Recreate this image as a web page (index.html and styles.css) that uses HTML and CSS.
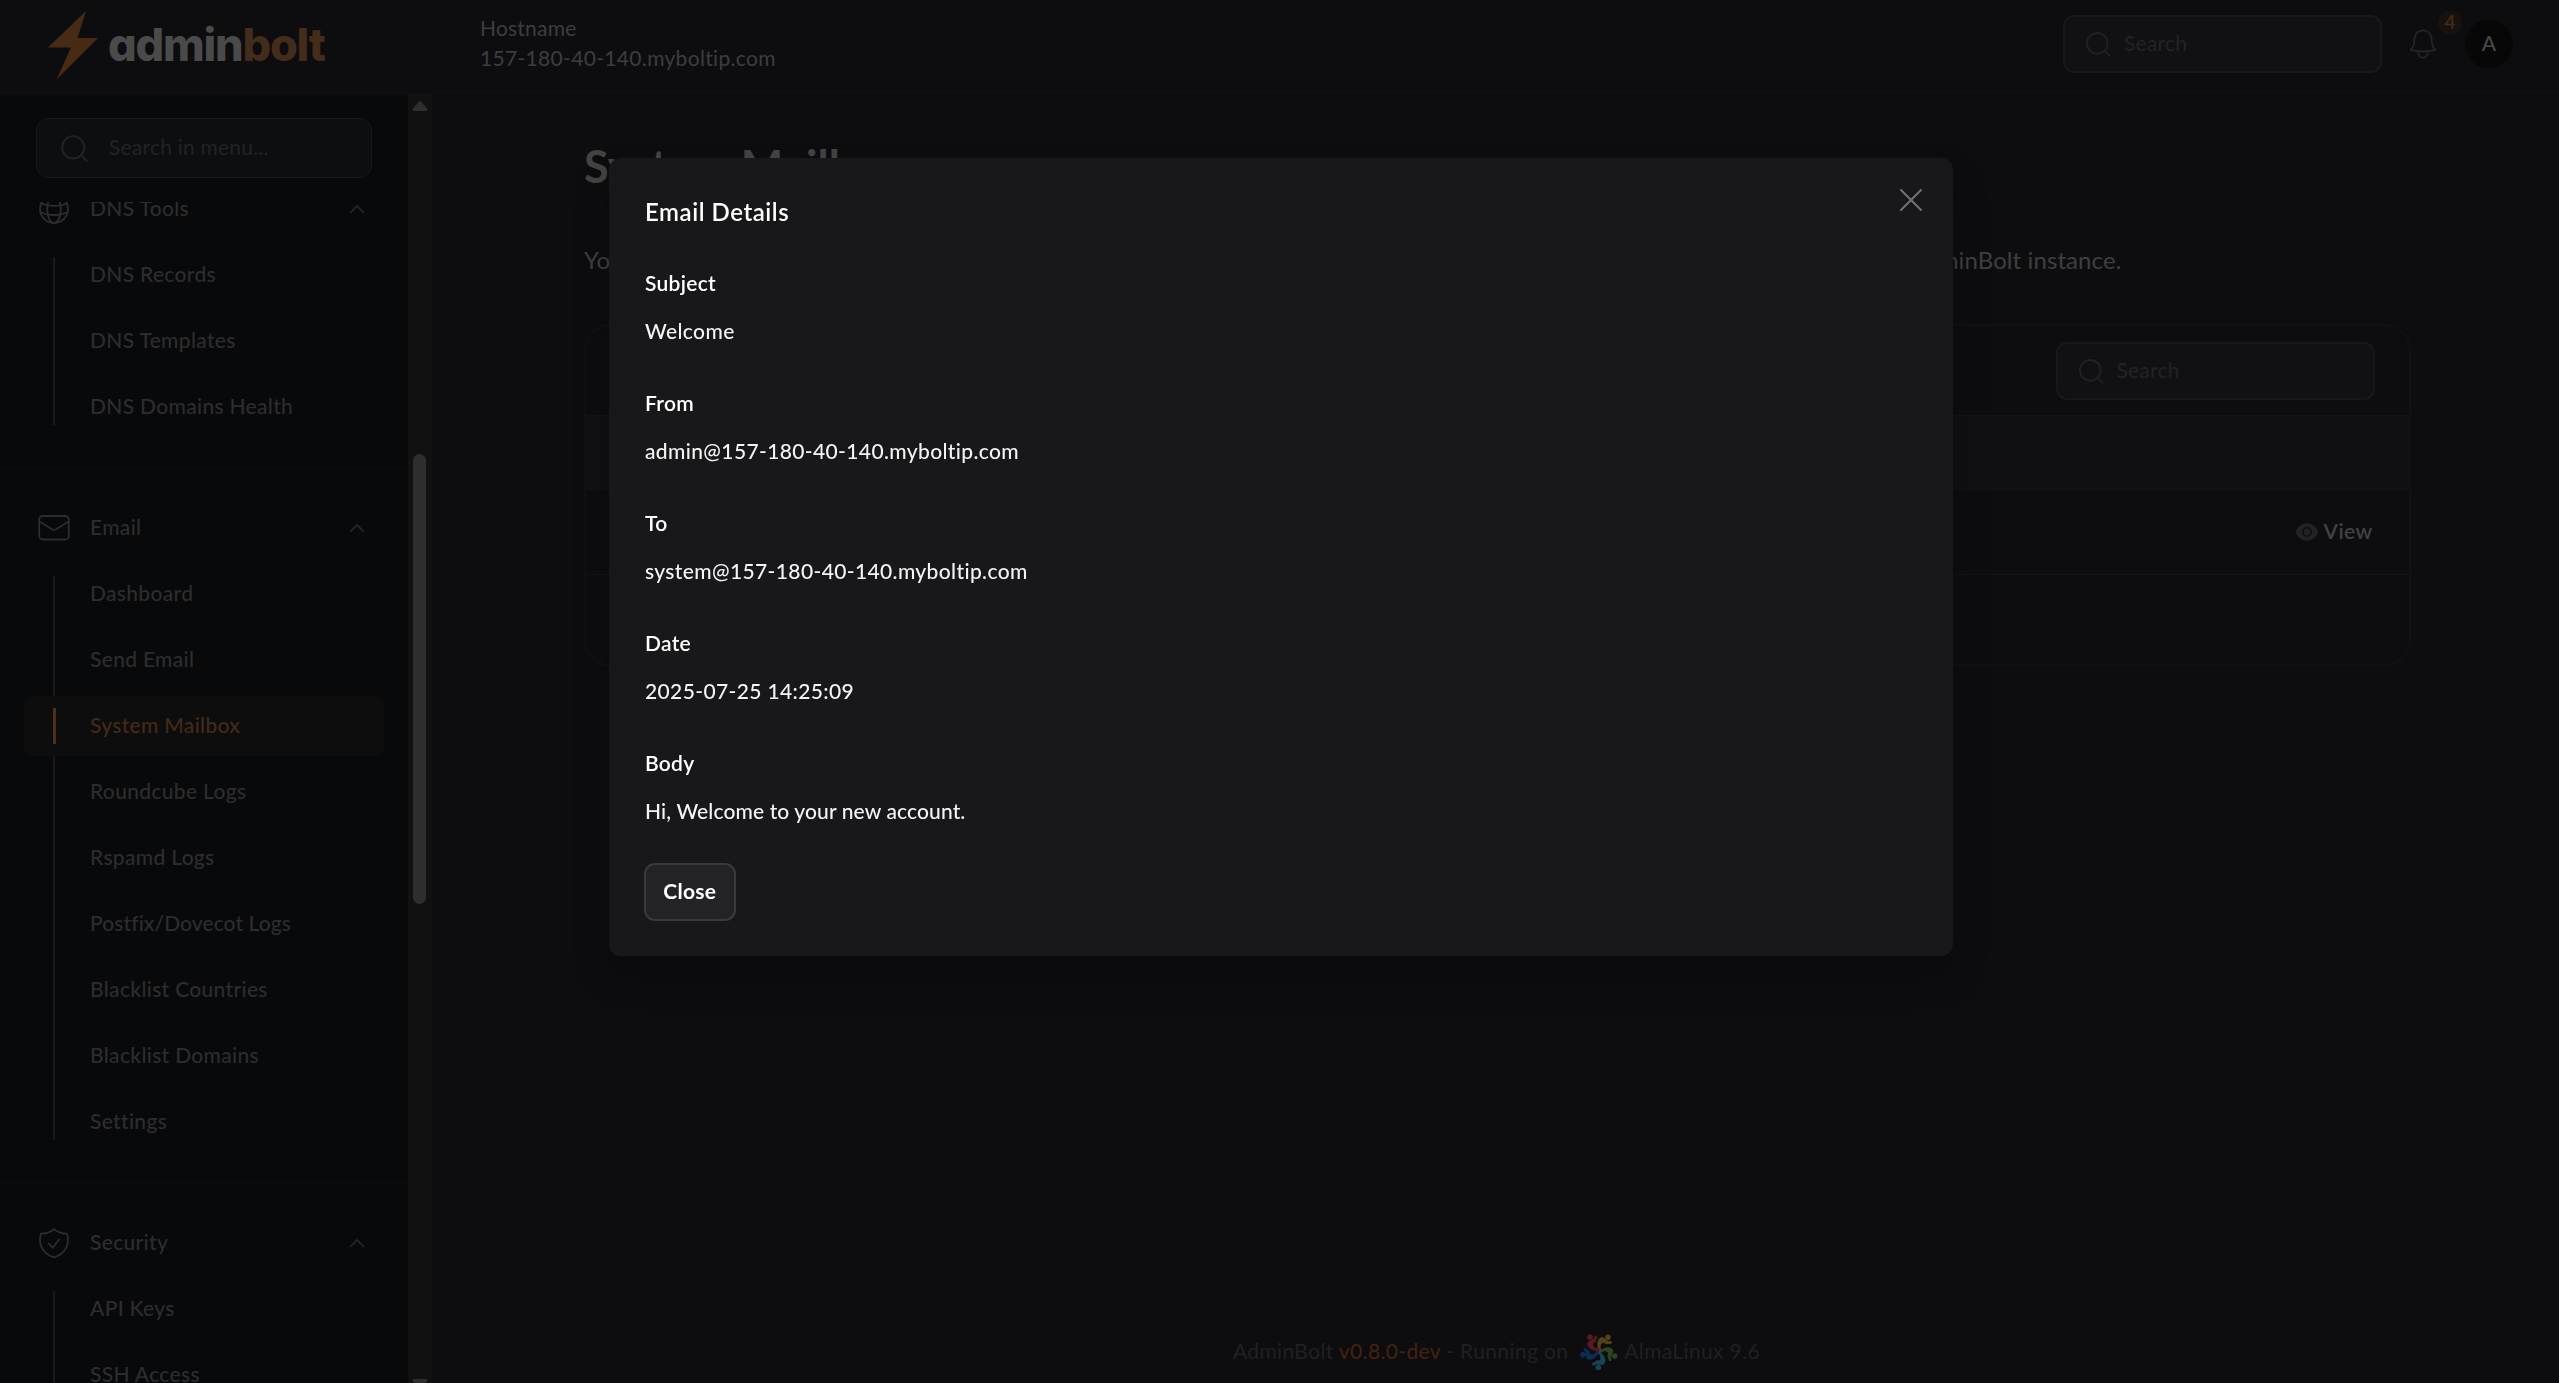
FILE: index.html
```html
<!DOCTYPE html>
<html lang="en">
<head>
<meta charset="utf-8">
<title>System Mailbox - AdminBolt</title>
<link rel="stylesheet" href="styles.css">
</head>
<body>
<svg class="defs" aria-hidden="true">
  <symbol id="search" viewBox="0 0 28 28"><circle cx="13.2" cy="13.3" r="11.1"/><path d="M21 21.2l5.6 5.6"/></symbol>
  <symbol id="chevron" viewBox="0 0 16 10"><path d="M1.6 8.4L8 2l6.400 6.400"/></symbol>
</svg>
<div class="app">
  <aside class="sidebar">
    <div class="brand">
      <svg class="bolt" viewBox="0 0 50 70"><defs><linearGradient id="g" x1="0" y1="0" x2="0" y2="1"><stop offset="0" stop-color="#452b18"/><stop offset="1" stop-color="#482b11"/></linearGradient></defs><path fill="url(#g)" d="M38 0L29.500 27H50L8.500 68.500 23 36.500H0z"/></svg>
      <span class="wordmark">admin<b>bolt</b></span>
    </div>
    <div class="side-body">
      <div class="side-col">
        <div class="menu-search"><svg class="ico28"><use href="#search"/></svg><span>Search in menu...</span></div>
        <nav class="nav">
          <section class="group group-first">
            <div class="group-head">
              <svg class="gicon" viewBox="0 0 36 36"><circle cx="18" cy="18" r="14"/><ellipse cx="18" cy="18" rx="6.800" ry="14"/><path d="M5 12.300c3.500 1.800 8 2.600 13 2.600s9.500-.8 13-2.600M4.200 20.700c3.600 2.100 8.400 3.300 13.800 3.300s10.200-1.200 13.800-3.300"/></svg>
              <span>DNS Tools</span><svg class="chev"><use href="#chevron"/></svg>
            </div>
            <ul><li>DNS Records</li><li>DNS Templates</li><li>DNS Domains Health</li></ul>
          </section>
          <section class="group">
            <div class="group-head">
              <svg class="gicon" viewBox="0 0 36 36"><rect x="3.200" y="6" width="29.600" height="23.500" rx="3.500"/><path d="M3.400 11.500L16 19.300a4 4 0 0 0 4 0l12.600-7.800"/></svg>
              <span>Email</span><svg class="chev"><use href="#chevron"/></svg>
            </div>
            <ul><li>Dashboard</li><li>Send Email</li><li class="active">System Mailbox</li><li>Roundcube Logs</li><li>Rspamd Logs</li><li class="tight">Postfix/Dovecot Logs</li><li>Blacklist Countries</li><li>Blacklist Domains</li><li>Settings</li></ul>
          </section>
          <section class="group">
            <div class="group-head">
              <svg class="gicon" viewBox="0 0 36 36"><path d="M18 4.200c-3.500 2.700-7.500 4.500-13 4.500-.7 2-1 4-1 6.300C4 23 9.500 30 18 32.300 26.500 30 32 23 32 15c0-2.300-.3-4.300-1-6.300-5.500 0-9.500-1.800-13-4.500zM12.800 18.500l4 4.300 6.400-8.600"/></svg>
              <span>Security</span><svg class="chev"><use href="#chevron"/></svg>
            </div>
            <ul><li>API Keys</li><li>SSH Access</li></ul>
          </section>
        </nav>
      </div>
      <div class="scrollbar">
        <svg class="arrow" viewBox="0 0 16 11"><path d="M8 2L2.200 9h11.600z"/></svg>
        <div class="thumb"></div>
        <svg class="arrow arrow-down" viewBox="0 0 16 11"><path d="M8 9L2.200 2h11.600z"/></svg>
      </div>
    </div>
  </aside>
  <main class="main">
    <header class="topbar">
      <div class="host"><span>Hostname</span><span class="host-name">157-180-40-140.myboltip.com</span></div>
      <div class="field"><svg class="ico26"><use href="#search"/></svg><span>Search</span></div>
      <div class="bell-wrap">
        <svg class="bell" viewBox="0 0 28 32"><path d="M14 2.300c-5 0-8.500 3.600-8.700 9l-.2 4c-.1 2.500-.9 4-3.500 6.500 4 1.200 8.200 1.700 12.400 1.700s8.400-.5 12.400-1.700c-2.600-2.500-3.400-4-3.500-6.500l-.2-4c-.2-5.400-3.700-9-8.700-9zM9.200 24.500c.3 3.200 2.200 5.200 4.800 5.200s4.500-2 4.800-5.200"/></svg>
        <span class="badge">4</span>
      </div>
      <div class="avatar">A</div>
    </header>
    <div class="page">
      <h1>System Mailbox</h1>
      <p class="intro"><span>You can view the system mailbox here.</span><span>These emails are sent by your AdminBolt instance.</span></p>
      <div class="card">
        <div class="card-tools"><div class="field"><svg class="ico26"><use href="#search"/></svg><span>Search</span></div></div>
        <div class="card-head"></div>
        <div class="card-row">
          <svg class="eye" viewBox="0 0 24 20"><path fill-rule="evenodd" d="M12 1.300C6.500 1.300 2.400 4.800.6 10c1.800 5.200 5.900 8.700 11.400 8.700S21.600 15.200 23.400 10C21.600 4.800 17.500 1.300 12 1.300zM12 5a5 5 0 1 1 0 10 5 5 0 0 1 0-10z"/><circle cx="12" cy="10" r="3.400"/></svg>
          <span>View</span>
        </div>
        <div class="card-foot"></div>
      </div>
    </div>
    <footer class="footer">
      <span>AdminBolt <b>v0.8.0-dev</b> - Running on</span>
      <svg class="alma" viewBox="-19 -19 38 38">
        <defs><g id="arm"><path d="M1 -1C-1.500 -7 -.5 -11 3 -12L7 -8.500 11.500 -8.500" fill="none" stroke-width="2.800"/><path d="M.8 -1C-3 -8 -1 -14 4 -14L9 -10 8 -6.500C4 -10 1.500 -8 .8 -1z" stroke="none"/><circle cx="9" cy="-13.800" r="2.800" stroke="none"/></g></defs>
        <use href="#arm" fill="#54411a" stroke="#54411a"/>
        <use href="#arm" fill="#2c4420" stroke="#2c4420" transform="rotate(75)"/>
        <use href="#arm" fill="#154557" stroke="#154557" transform="rotate(149)"/>
        <use href="#arm" fill="#0b2c55" stroke="#0b2c55" transform="rotate(224)"/>
        <use href="#arm" fill="#541b20" stroke="#541b20" transform="rotate(294)"/>
      </svg>
      <span>AlmaLinux 9.6</span>
    </footer>
  </main>
</div>
<div class="modal" role="dialog">
  <div class="modal-head"><h2>Email Details</h2><svg class="close-x" viewBox="0 0 24 24"><path d="M2 2l20 20M22 2L2 22"/></svg></div>
  <dl>
    <div><dt>Subject</dt><dd>Welcome</dd></div>
    <div><dt>From</dt><dd>admin@157-180-40-140.myboltip.com</dd></div>
    <div><dt>To</dt><dd>system@157-180-40-140.myboltip.com</dd></div>
    <div><dt>Date</dt><dd>2025-07-25 14:25:09</dd></div>
    <div><dt>Body</dt><dd class="body-text">Hi, Welcome to your new account.</dd></div>
  </dl>
  <button class="btn">Close</button>
</div>
</body>
</html>
```
FILE: styles.css
```css
* { box-sizing: border-box; }
body {
  margin: 0;
  height: 100vh;
  overflow: hidden;
  background: #0d0d0f;
  color: #3f3f41;
  font: 400 21px/30px Lato, "Open Sans", sans-serif;
  letter-spacing: .22px;
}
svg { display: block; flex: none; fill: none; stroke: currentColor; stroke-width: 1.8; stroke-linecap: round; stroke-linejoin: round; }
.defs { position: absolute; width: 0; height: 0; }
.app { display: grid; grid-template-columns: 432px 1fr; height: 100vh; }

/* Sidebar */
.sidebar { display: flex; flex-direction: column; height: 100vh; background: #08090a; }
.brand { flex: none; display: flex; height: 94px; padding: 11px 0 0 48px; background: #0d0d0f; border-bottom: 1px solid #121214; }
.bolt { width: 50px; height: 70px; stroke: none; }
.wordmark { margin: 6px 0 0 10px; color: #4a4a4b; font: 800 45px/56px Inter, sans-serif; font-feature-settings: "cv11"; letter-spacing: -1.2px; }
.wordmark b { color: #432c19; font-weight: 800; }
.side-body { flex: 1; min-height: 0; display: flex; }
.side-col { width: 408px; display: flex; flex-direction: column; }
.menu-search { flex: none; display: flex; align-items: center; gap: 21px; height: 60px; margin: 24px 36px 24px; padding: 0 0 2px 23px; background: #0d0e10; border: 1px solid #17181a; border-radius: 12px; color: #212327; }
.menu-search svg { color: #202224; stroke-width: 2.1; margin-top: 1px; }
.ico28 { width: 28px; height: 28px; }
.ico26 { width: 26px; height: 26px; stroke-width: 2.1; }
.nav { flex: 1; min-height: 0; overflow: hidden; color: #2d2d2f; font-weight: 500; letter-spacing: .32px; }
.group { padding: 30px 24px; border-bottom: 1px solid #0d0e10; }
.group-first { margin-top: -23px; padding-top: 0; }
.group-head { display: flex; align-items: center; height: 60px; padding: 0 12px; }
.group-head span { flex: 1; margin-left: 18px; padding-bottom: 2px; }
.gicon { width: 36px; height: 36px; }
.chev { width: 16px; height: 10px; margin-right: 7px; color: #242427; stroke-width: 2; }
.group ul { position: relative; display: grid; gap: 6px; margin: 6px 0 0; padding: 0; list-style: none; }
.group ul::before { content: ""; position: absolute; left: 29px; top: 12px; bottom: 12px; width: 2px; background: #1a1a1c; }
.group:last-child ul::before { bottom: 0; }
.group li { position: relative; height: 60px; padding: 14px 0 0 66px; border-radius: 9px; }
.group .tight { letter-spacing: .08px; }
.group .active { background: #0d0d0d; color: #432b19; }
.active::before { content: ""; position: absolute; left: 29px; top: 12px; width: 3px; height: 36px; background: #4d2f19; }
.scrollbar { display: flex; flex-direction: column; align-items: center; width: 24px; padding-top: 6px; background: #111112; }
.arrow { width: 16px; height: 12px; color: #2e2e2e; fill: currentColor; stroke-width: 3; }
.thumb { width: 13px; height: 450px; margin: 342px 2px 474px 0; border-radius: 7px; background: #2e2e2e; flex: none; }

/* Top bar */
.main { display: flex; flex-direction: column; min-width: 0; }
.topbar { flex: none; display: flex; align-items: center; height: 93px; padding: 0 46px 5px 48px; border-bottom: 1px solid #121214; }
.host { flex: 1; display: flex; flex-direction: column; padding-bottom: 1px; color: #3d3d3f; }
.host-name { letter-spacing: .32px; }
.field { display: flex; align-items: center; gap: 13px; width: 319px; height: 58px; padding: 0 20px; background: #111113; border: 2px solid #17181a; border-radius: 11px; color: #212327; }
.field svg { color: #202124; }
.field span { padding-bottom: 2px; }
.bell-wrap { position: relative; margin-left: 27px; }
.bell { width: 28px; height: 32px; color: #252528; }
.badge { position: absolute; left: 29px; top: -17px; width: 24px; height: 24px; border-radius: 50%; background: #17120f; color: #472b16; font-size: 19px; font-weight: 500; line-height: 22px; text-align: center; letter-spacing: 0; }
.avatar { width: 48px; height: 48px; margin-left: 28px; border-radius: 50%; background: #070708; color: #47494b; line-height: 46px; text-align: center; font-weight: 500; }

/* Page */
.page { flex: 1; padding: 37px 148.500px 0 152px; }
h1 { margin: 0; font-size: 45px; line-height: 72px; letter-spacing: .15px; color: #434344; }
.intro { display: flex; justify-content: space-between; width: 1537.500px; margin: 40px 0 0; font-size: 24px; line-height: 36px; letter-spacing: .1px; }
.card { margin-top: 46px; border: 2px solid #111113; border-radius: 26px; overflow: hidden; height: 342px; }
.card-tools { display: flex; justify-content: flex-end; align-items: center; height: 89px; padding-right: 34px; }
.card-head { height: 75px; background: #101012; border: 1px solid #131413; border-width: 1px 0; }
.card-row { display: flex; justify-content: flex-end; align-items: center; gap: 5px; height: 85px; padding-right: 36px; border-bottom: 1px solid #131315; color: #424243; font-weight: 600; letter-spacing: .4px; }
.eye { width: 24px; height: 20px; color: #222225; fill: currentColor; stroke: none; }
.card-row span { padding-bottom: 2px; }

/* Footer */
.footer { flex: none; display: flex; justify-content: center; align-items: center; height: 63px; padding: 0 0 1px 2px; color: #1f2024; letter-spacing: .36px; }
.footer b { font-weight: 400; color: #44220f; }
.alma { width: 38px; height: 38px; margin: 0 6px 0 12px; }

/* Dialog */
.modal { position: fixed; left: 609px; top: 158px; width: 1344px; height: 798px; padding: 36px 36px 0; border-radius: 12px; background: #18181a; color: #fff; box-shadow: 0 20px 36px rgba(0, 0, 0, .22); }
.modal-head { display: flex; justify-content: space-between; }
h2 { margin: 0; font-size: 24px; line-height: 36px; font-weight: 600; letter-spacing: .55px; }
.close-x { width: 24px; height: 24px; margin: -6px -6px 0 0; color: #71717a; stroke-width: 2; }
dl { display: grid; gap: 36px; margin: 35px 0 34px; line-height: 36px; font-weight: 500; letter-spacing: .37px; }
dt { font-weight: 600; margin-bottom: 12px; letter-spacing: .28px; }
dd { margin: 0; color: #f4f4f5; }
.body-text { letter-spacing: .12px; }
.btn { display: block; margin-left: -1.500px; width: 92.500px; height: 58px; padding: 0 0 2px; border: 2px solid #3a3a3c; border-radius: 11px; background: #232325; color: #fff; font: 700 21px/30px Lato, sans-serif; letter-spacing: .28px; }
```
